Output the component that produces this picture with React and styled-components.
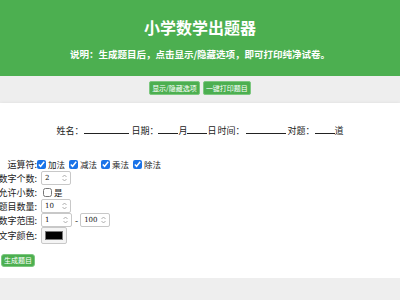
import React from "react";
import styled, { createGlobalStyle } from "styled-components";

const Global = createGlobalStyle`
  html, body { margin: 0; padding: 0; background: #eeeeee; }
  body { font-family: "Noto Sans CJK SC", "Noto Sans", sans-serif; color: #222; }
  * { box-sizing: border-box; }
`;

const Header = styled.header`
  background: #4caf50;
  height: 76px;
  color: #fff;
  text-align: center;
  padding-top: 15px;
`;

const Title = styled.h1`
  margin: 0;
  font-size: 16px;
  line-height: 24px;
  font-weight: 700;
`;

const Note = styled.p`
  margin: 8px 0 0;
  font-size: 9.5px;
  line-height: 14px;
  font-weight: 700;
`;

const Toolbar = styled.div`
  display: flex;
  justify-content: center;
  gap: 3px;
  padding-top: 5px;
  height: 27px;
`;

const GreenButton = styled.button`
  font-family: inherit;
  background: #4caf50;
  color: #fff;
  border: 1px solid #7cc77f;
  border-radius: 2px;
  font-size: 7px;
  line-height: 12px;
  height: 14px;
  padding: 0 2px;
  cursor: pointer;
`;

const Card = styled.main`
  background: #fff;
  box-shadow: 0 1px 4px rgba(0, 0, 0, 0.12);
  padding: 20px 0 20px;
  height: 175px;
`;

const InfoLine = styled.div`
  text-align: center;
  font-size: 9px;
  line-height: 16px;
  color: #222;
  margin-bottom: 18px;
  word-spacing: -1px;
`;

const Blank = styled.span`
  display: inline-block;
  width: ${(p) => p.$w}px;
  height: 10px;
  border-bottom: 1px solid #222;
  margin: 0 ${(p) => p.$m || 0}px;
  vertical-align: baseline;
`;

const Row = styled.div`
  display: flex;
  align-items: center;
  height: ${(p) => p.$h || 14}px;
  font-size: 9px;
`;

const Label = styled.span`
  flex: none;
  width: 37px;
  display: flex;
  justify-content: flex-end;
  white-space: nowrap;
  color: #222;
`;

const Check = styled.input.attrs({ type: "checkbox" })`
  width: 9px;
  height: 9px;
  margin: 0 2px 0 ${(p) => p.$ml ?? 4}px;
  accent-color: #1a73e8;
`;

const OptText = styled.span`
  font-size: 8.5px;
`;

const NumBox = styled.div`
  display: flex;
  align-items: center;
  width: ${(p) => p.$w || 30}px;
  height: 14px;
  margin-left: ${(p) => p.$ml ?? 4}px;
  border: 1px solid #c8c8c8;
  border-radius: 2px;
  background: #fff;
  font-size: 7px;
  padding-left: 3px;
  font-family: "DejaVu Serif", serif;
  color: #111;
`;

const NumValue = styled.span`
  flex: 1;
`;

const Spin = styled.svg`
  width: 7px;
  height: 10px;
  margin-right: 2px;
`;

const Dash = styled.span`
  margin: 0 2px 0 3px;
  font-size: 9px;
`;

const ColorBox = styled.div`
  width: 26px;
  height: 17px;
  margin-left: 4px;
  border: 1px solid #c8c8c8;
  border-radius: 2px;
  padding: 3px;
  background: #f4f4f4;
`;

const Swatch = styled.div`
  width: 100%;
  height: 100%;
  background: #000;
  border: 1px solid #777;
`;

const GenButton = styled(GreenButton)`
  margin: 1px 0 0 1px;
  height: 13px;
  line-height: 11px;
  border-radius: 3px;
`;

function Num({ value, w, ml }) {
  return (
    <NumBox $w={w} $ml={ml}>
      <NumValue>{value}</NumValue>
      <Spin viewBox="0 0 7 10">
        <path d="M1.5 4 L3.5 2 L5.5 4" fill="none" stroke="#999" strokeWidth="0.8" />
        <path d="M1.5 6 L3.5 8 L5.5 6" fill="none" stroke="#999" strokeWidth="0.8" />
      </Spin>
    </NumBox>
  );
}

export default function App() {
  return (
    <>
      <Global />
      <Header>
        <Title>小学数学出题器</Title>
        <Note>说明：生成题目后，点击显示/隐藏选项，即可打印纯净试卷。</Note>
      </Header>
      <Toolbar>
        <GreenButton>显示/隐藏选项</GreenButton>
        <GreenButton>一键打印题目</GreenButton>
      </Toolbar>
      <Card>
        <InfoLine>
          姓名：<Blank $w={45} $m={1} /> 日期：<Blank $w={20} />月<Blank $w={20} />日 时间：<Blank $w={40} $m={1} /> 对题：<Blank $w={20} />道
        </InfoLine>
        <Row>
          <Label>运算符:</Label>
          <Check $ml={0} defaultChecked />
          <OptText>加法</OptText>
          <Check defaultChecked />
          <OptText>减法</OptText>
          <Check defaultChecked />
          <OptText>乘法</OptText>
          <Check defaultChecked />
          <OptText>除法</OptText>
        </Row>
        <Row>
          <Label>数字个数:</Label>
          <Num value="2" />
        </Row>
        <Row>
          <Label>允许小数:</Label>
          <Check $ml={6} />
          <OptText>是</OptText>
        </Row>
        <Row>
          <Label>题目数量:</Label>
          <Num value="10" />
        </Row>
        <Row>
          <Label>数字范围:</Label>
          <Num value="1" w={31} />
          <Dash>-</Dash>
          <Num value="100" w={30} ml={0} />
        </Row>
        <Row $h={17}>
          <Label>文字颜色:</Label>
          <ColorBox>
            <Swatch />
          </ColorBox>
        </Row>
        <GenButton>生成题目</GenButton>
      </Card>
    </>
  );
}
